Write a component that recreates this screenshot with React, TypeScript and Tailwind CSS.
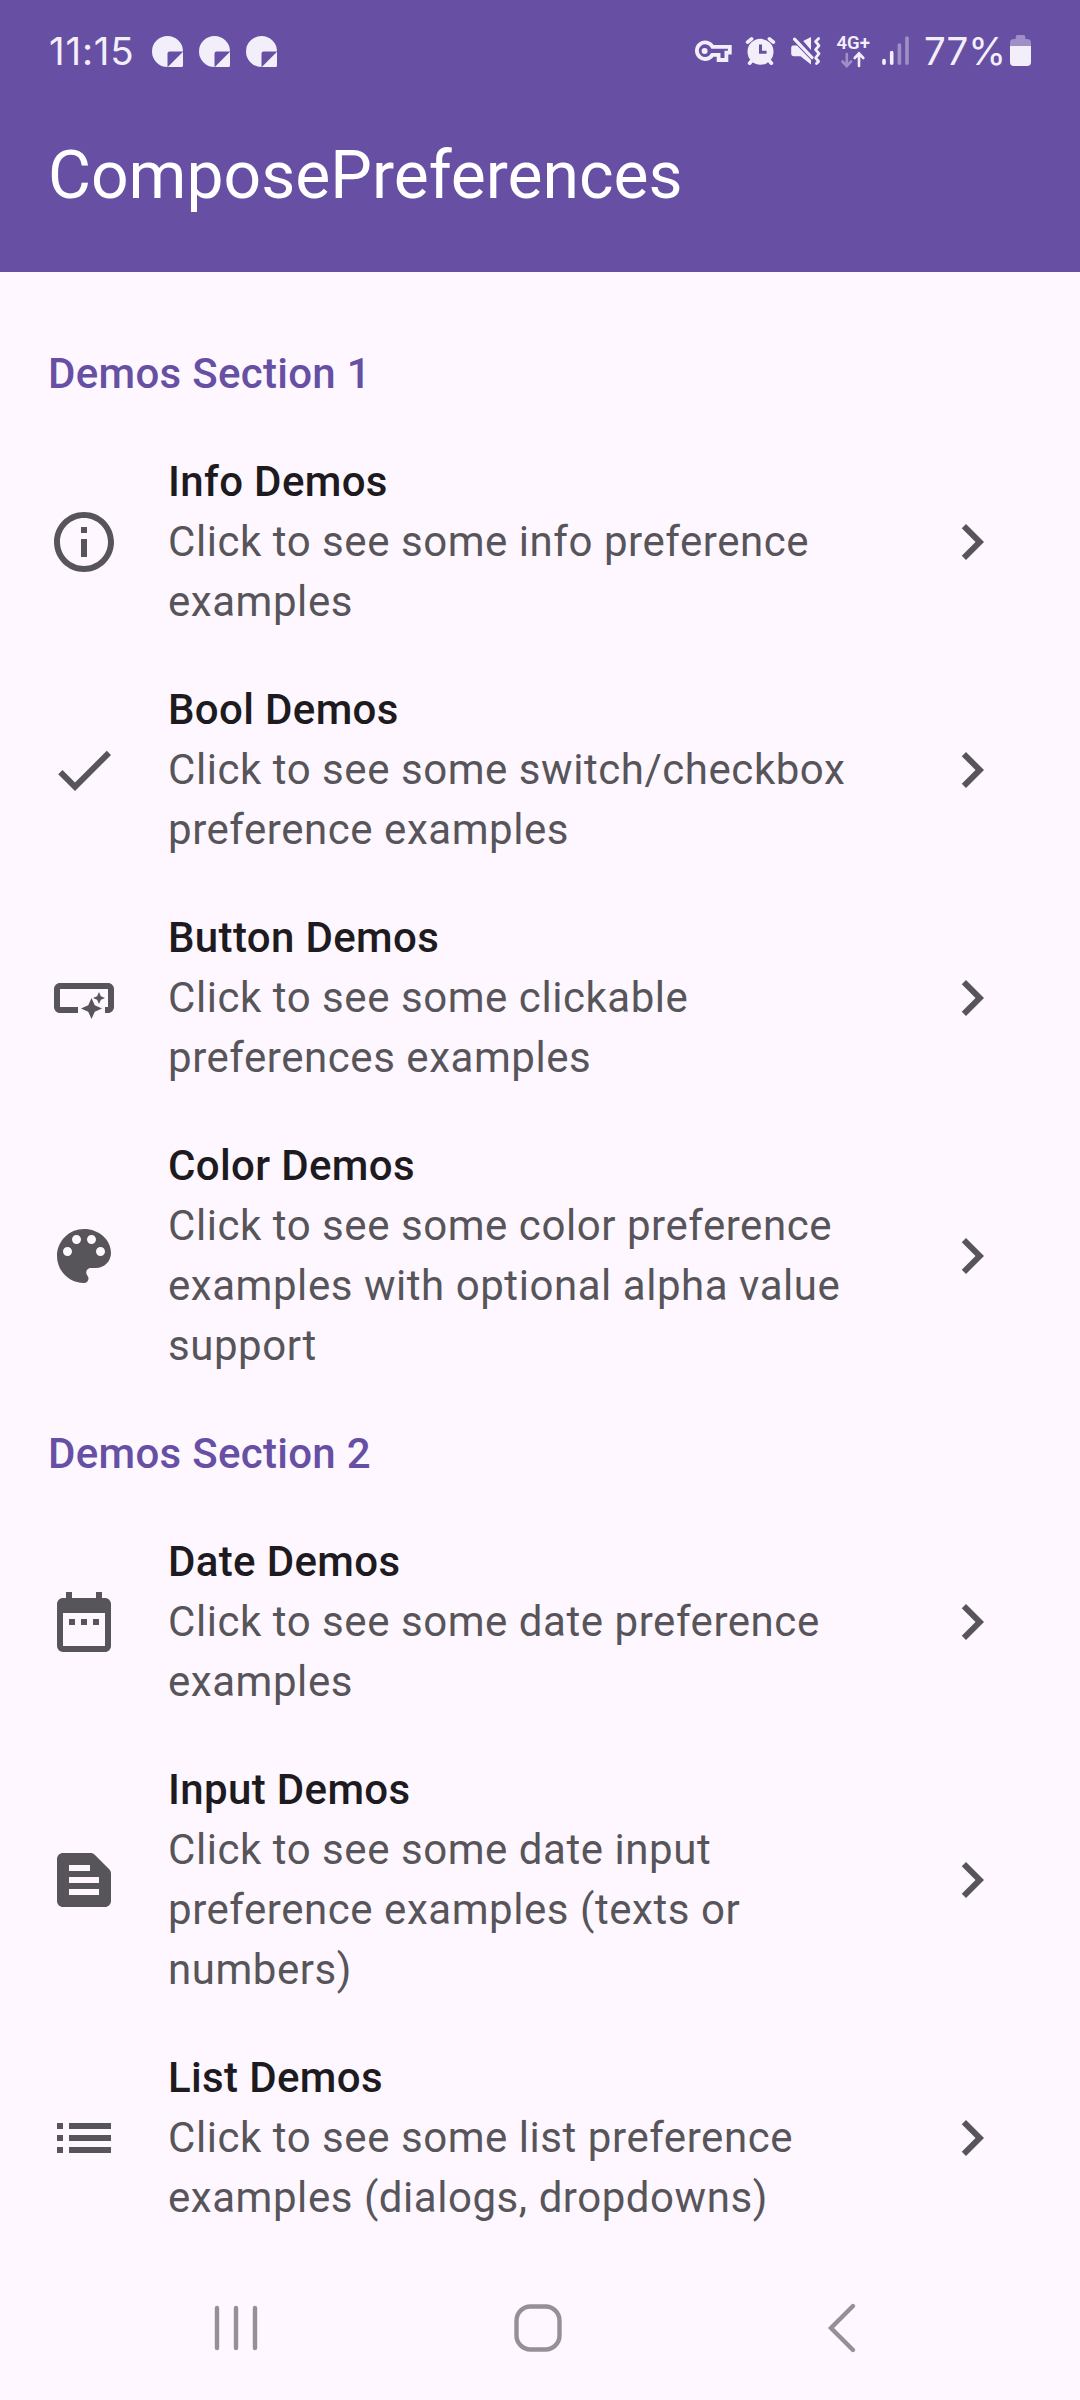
import type { ComponentType, ReactNode } from "react";
import {
  MdCheck,
  MdChevronRight,
  MdDateRange,
  MdInfoOutline,
  MdList,
  MdOutlineSmartButton,
  MdTextSnippet,
} from "react-icons/md";

type Item = { title: string; lines: string[]; icon: ComponentType<{ className?: string }> };

function PaletteIcon({ className }: { className?: string }) {
  return (
    <svg className={className} viewBox="0 0 24 24" fill="currentColor">
      <path d="M12 3c-4.97 0-9 4.03-9 9s4.03 9 9 9c.83 0 1.5-.67 1.5-1.5 0-.39-.15-.74-.39-1.01-.23-.26-.38-.61-.38-.99 0-.83.67-1.5 1.5-1.5H16c2.76 0 5-2.24 5-5 0-4.42-4.03-8-9-8zm-5.5 9c-.83 0-1.5-.67-1.5-1.5S5.67 9 6.5 9 8 9.67 8 10.5 7.33 12 6.5 12zm3-4C8.67 8 8 7.33 8 6.5S8.67 5 9.5 5s1.5.67 1.5 1.5S10.33 8 9.5 8zm5 0c-.83 0-1.5-.67-1.5-1.5S13.67 5 14.5 5s1.5.67 1.5 1.5S15.33 8 14.5 8zm3 4c-.83 0-1.5-.67-1.5-1.5S16.67 9 17.5 9s1.5.67 1.5 1.5-.67 1.5-1.5 1.5z" />
    </svg>
  );
}

const sections: { title: string; items: Item[] }[] = [
  {
    title: "Demos Section 1",
    items: [
      { title: "Info Demos", lines: ["Click to see some info preference", "examples"], icon: MdInfoOutline },
      { title: "Bool Demos", lines: ["Click to see some switch/checkbox", "preference examples"], icon: MdCheck },
      { title: "Button Demos", lines: ["Click to see some clickable", "preferences examples"], icon: MdOutlineSmartButton },
      {
        title: "Color Demos",
        lines: ["Click to see some color preference", "examples with optional alpha value", "support"],
        icon: PaletteIcon,
      },
    ],
  },
  {
    title: "Demos Section 2",
    items: [
      { title: "Date Demos", lines: ["Click to see some date preference", "examples"], icon: MdDateRange },
      {
        title: "Input Demos",
        lines: ["Click to see some date input", "preference examples (texts or", "numbers)"],
        icon: MdTextSnippet,
      },
      { title: "List Demos", lines: ["Click to see some list preference", "examples (dialogs, dropdowns)"], icon: MdList },
    ],
  },
];

function NoteIcon() {
  return (
    <svg className="block h-[31px] w-[31px]" viewBox="0 0 31 31" fill="currentColor">
      <path d="M15.5 0A15.5 15.5 0 0 1 31 15.5H17.5a2 2 0 0 0-2 2V31A15.5 15.5 0 0 1 15.5 0Z" />
      <path d="M31 15.8V29.5a1.5 1.5 0 0 1-1.5 1.5H15.8Z" />
    </svg>
  );
}

function StatusIcons() {
  return (
    <svg className="block h-[65px] w-[230px]" viewBox="0 0 230 65" fill="none" stroke="currentColor">
      {/* VPN key */}
      <path d="M32.5 26.8H49.8V32.6H46.4V40H38.6V34.8H32.4A8.3 8.3 0 1 1 32.5 26.8Z" strokeWidth="3.8" />
      <circle cx="24.6" cy="31" r="3" fill="currentColor" stroke="none" />
      {/* Alarm clock */}
      <circle cx="80.5" cy="31.8" r="13" fill="currentColor" stroke="none" />
      <path d="M67.6 22.2L71.6 18.8M93.4 22.2L89.4 18.8M71.5 41L69.6 43.2M89.5 41L91.4 43.2" strokeWidth="3.6" strokeLinecap="round" />
      <path d="M80.5 24.5V32.2H86.6" stroke="#6750a4" strokeWidth="3" />
      {/* Muted speaker with vibration */}
      <path d="M112.6 25.5H117L131 40V44.5L120.5 36.3H114Q111.2 36.3 111.2 33.5V28Q111.2 25.5 112.6 25.5Z" fill="currentColor" stroke="none" />
      <path d="M123.2 21L131 17V30Z" fill="currentColor" stroke="none" />
      <path d="M114.5 19.2L132 37.5" strokeWidth="3.2" strokeLinecap="round" />
      <path d="M138.6 18.5L135.6 21.5L139 25.6L135.6 29.6L139 33.7L135.6 37.8L138.6 41.5L136.5 43.5" strokeWidth="2.8" strokeLinecap="round" strokeLinejoin="round" />
      {/* Network type and traffic arrows */}
      <text x="156.5" y="29.3" fill="currentColor" stroke="none" className="font-['Roboto'] text-[18.5px] font-semibold">
        4G+
      </text>
      <path d="M166.8 34V45M162.5 41.5L166.8 46L171 41.5" strokeWidth="2.6" opacity="0.4" strokeLinecap="round" />
      <path d="M179 46V34M174.7 38L179 33.5L183.3 38" strokeWidth="2.6" strokeLinecap="round" />
      {/* Signal strength */}
      <path d="M204 40.5V43.3M211.7 32.5V43.3" strokeWidth="3.6" strokeLinecap="round" />
      <path d="M219.4 25V43.3M227 18V43.3" strokeWidth="3.6" strokeLinecap="round" opacity="0.4" />
    </svg>
  );
}

function StatusBar() {
  return (
    <div className="flex h-[105px] items-start pt-[20px] text-[#f3effa]">
      <div className="ml-[49px] w-[103px] font-['Inter'] text-[38.5px] leading-[62px] tracking-[0.8px]">11:15</div>
      <div className="mt-[16px] flex gap-[16px]">
        <NoteIcon />
        <NoteIcon />
        <NoteIcon />
      </div>
      <div className="ml-[403px]">
        <StatusIcons />
      </div>
      <div className="ml-[14px] w-[85px] font-['Inter'] text-[38.5px] leading-[62px]">77%</div>
      <svg className="mt-[15px] ml-[1px] h-[32px] w-[21px]" viewBox="0 0 22 32" preserveAspectRatio="none" fill="currentColor">
        <path d="M6 2Q6 0 8 0H14Q16 0 16 2V4H18Q22 4 22 8V11H0V8Q0 4 4 4H6Z" opacity="0.4" />
        <path d="M0 11H22V27Q22 31 18 31H4Q0 31 0 27Z" />
      </svg>
    </div>
  );
}

function SectionTitle({ children }: { children: ReactNode }) {
  return (
    <h2 className="flex h-[108px] items-center px-[48px] text-[42px] leading-[60px] font-medium tracking-[0.3px] text-[#6750a4]">
      {children}
    </h2>
  );
}

function PreferenceRow({ title, lines, icon: Icon }: Item) {
  return (
    <div className="flex items-center py-[24px] pr-[72px] pl-[48px]">
      <Icon className="h-[72px] w-[72px] shrink-0 text-[#57555a]" />
      <div className="ml-[48px] flex-1 text-[42px] leading-[60px] whitespace-nowrap">
        <div className="font-medium tracking-[0.35px] text-[#1d1b20]">{title}</div>
        {lines.map((line) => (
          <div key={line} className="tracking-[0.55px] text-[#57555a]">
            {line}
          </div>
        ))}
      </div>
      <MdChevronRight className="h-[72px] w-[72px] shrink-0 text-[#57555a]" />
    </div>
  );
}

function NavigationBar() {
  return (
    <nav className="flex h-[145px] items-center text-[#958f99]">
      <svg className="ml-[200px] h-[60px] w-[72px]" viewBox="0 0 72 60" fill="none" stroke="currentColor" strokeWidth="4.4" strokeLinecap="round">
        <path d="M17 10V50M36 10V50M55 10V50" />
      </svg>
      <svg className="ml-[230px] h-[60px] w-[72px]" viewBox="0 0 72 60" fill="none" stroke="currentColor" strokeWidth="4.4">
        <rect x="14.5" y="8.5" width="43" height="43" rx="14" />
      </svg>
      <svg className="ml-[230px] h-[60px] w-[72px]" viewBox="0 0 72 60" fill="none" stroke="currentColor" strokeWidth="4.4" strokeLinecap="round">
        <path d="M49 8L27 30L49 52" />
      </svg>
    </nav>
  );
}

export default function App() {
  return (
    <div className="flex h-[2400px] w-[1080px] flex-col overflow-hidden bg-[#fef7ff] font-['Roboto',sans-serif]">
      <header className="h-[272px] shrink-0 bg-[#6750a4]">
        <StatusBar />
        <h1 className="pl-[48px] text-[66px] leading-[142px] text-white">ComposePreferences</h1>
      </header>
      <main className="flex-1 pt-[48px]">
        {sections.map((section) => (
          <section key={section.title}>
            <SectionTitle>{section.title}</SectionTitle>
            {section.items.map((item) => (
              <PreferenceRow key={item.title} {...item} />
            ))}
          </section>
        ))}
      </main>
      <NavigationBar />
    </div>
  );
}
